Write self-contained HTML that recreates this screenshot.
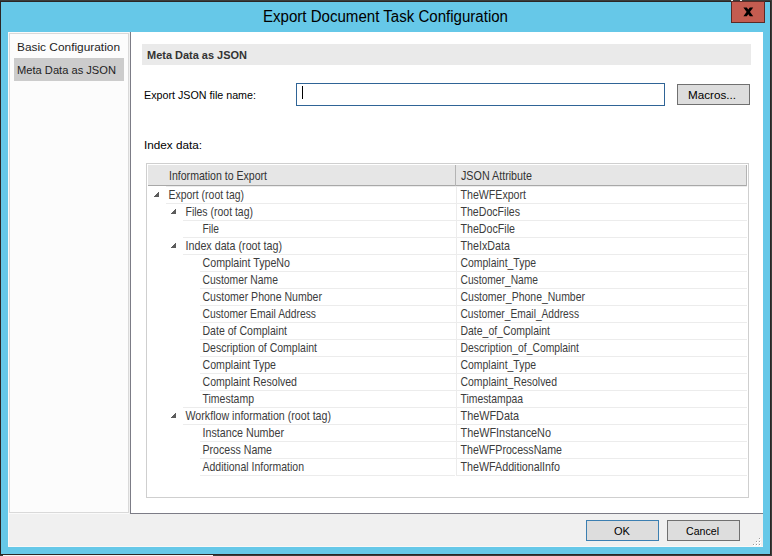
<!DOCTYPE html>
<html><head><meta charset="utf-8"><style>
html,body{margin:0;padding:0;width:772px;height:556px;overflow:hidden;position:relative;background:#2b2625;}
svg text{font-family:"Liberation Sans", sans-serif;}
</style></head><body>
<div style="position:absolute;left:0px;top:0px;width:772px;height:556px;background:#2b2625;"></div><div style="position:absolute;left:0px;top:0px;width:772px;height:1px;background:#3b3d3b;"></div><div style="position:absolute;left:0px;top:555px;width:772px;height:1px;background:#3b3d3b;"></div><div style="position:absolute;left:771px;top:0px;width:1px;height:556px;background:#3b3d3b;"></div><div style="position:absolute;left:1px;top:2px;width:769px;height:552px;background:#66c8e8;"></div><div style="position:absolute;left:8px;top:32px;width:755px;height:515px;background:#f0f0f0;"></div><div style="position:absolute;left:8px;top:32px;width:1px;height:515px;background:#fafafa;"></div><div style="position:absolute;left:8px;top:546px;width:755px;height:1px;background:#f8f8f8;"></div><div style="position:absolute;left:3px;top:555px;width:210px;height:1px;background:#f4f4f4;"></div><div style="position:absolute;left:8px;top:32px;width:121px;height:482px;background:#fafafa;"></div><div style="position:absolute;left:9px;top:33px;width:120px;height:480px;box-sizing:border-box;border:1px solid #d9d9d9;background:#fcfcfc"></div><div style="position:absolute;left:14px;top:58px;width:110px;height:23px;background:#cccccc;"></div><div style="position:absolute;left:130px;top:32px;width:633px;height:482px;background:#ffffff;"></div><div style="position:absolute;left:130px;top:32px;width:1px;height:482px;background:#7c7c86;"></div><div style="position:absolute;left:130px;top:513px;width:633px;height:1px;background:#7c7c86;"></div><div style="position:absolute;left:142px;top:44px;width:609px;height:21px;background:#eaeaea;"></div><div style="position:absolute;left:296px;top:83px;width:369px;height:23px;box-sizing:border-box;border:1px solid #2f6496;background:#ffffff"></div><div style="position:absolute;left:302px;top:86px;width:1px;height:13px;background:#000000;"></div><div style="position:absolute;left:677px;top:84px;width:73px;height:21px;box-sizing:border-box;border:1px solid #707070;background:#dddddd"></div><div style="position:absolute;left:146px;top:163px;width:603px;height:335px;box-sizing:border-box;border:1px solid #cfcfcf;background:#ffffff"></div><div style="position:absolute;left:148px;top:165px;width:599px;height:20px;background:#e6e6e6;"></div><div style="position:absolute;left:148px;top:185px;width:599px;height:1px;background:#a8a8a8;"></div><div style="position:absolute;left:746px;top:165px;width:1px;height:21px;background:#b4b4b4;"></div><div style="position:absolute;left:455px;top:165px;width:1px;height:21px;background:#b4b4b4;"></div><div style="position:absolute;left:166px;top:186px;width:290px;height:1px;background:#ececec;"></div><div style="position:absolute;left:456px;top:186px;width:291px;height:1px;background:#ececec;"></div><div style="position:absolute;left:158px;top:192px;width:1px;height:1px;background:#5c5c5c;"></div><div style="position:absolute;left:157px;top:193px;width:2px;height:1px;background:#5c5c5c;"></div><div style="position:absolute;left:156px;top:194px;width:3px;height:1px;background:#5c5c5c;"></div><div style="position:absolute;left:155px;top:195px;width:4px;height:1px;background:#5c5c5c;"></div><div style="position:absolute;left:154px;top:196px;width:5px;height:1px;background:#5c5c5c;"></div><div style="position:absolute;left:166px;top:203px;width:290px;height:1px;background:#ececec;"></div><div style="position:absolute;left:456px;top:203px;width:291px;height:1px;background:#ececec;"></div><div style="position:absolute;left:175px;top:209px;width:1px;height:1px;background:#5c5c5c;"></div><div style="position:absolute;left:174px;top:210px;width:2px;height:1px;background:#5c5c5c;"></div><div style="position:absolute;left:173px;top:211px;width:3px;height:1px;background:#5c5c5c;"></div><div style="position:absolute;left:172px;top:212px;width:4px;height:1px;background:#5c5c5c;"></div><div style="position:absolute;left:171px;top:213px;width:5px;height:1px;background:#5c5c5c;"></div><div style="position:absolute;left:183px;top:220px;width:273px;height:1px;background:#ececec;"></div><div style="position:absolute;left:456px;top:220px;width:291px;height:1px;background:#ececec;"></div><div style="position:absolute;left:183px;top:237px;width:273px;height:1px;background:#ececec;"></div><div style="position:absolute;left:456px;top:237px;width:291px;height:1px;background:#ececec;"></div><div style="position:absolute;left:175px;top:243px;width:1px;height:1px;background:#5c5c5c;"></div><div style="position:absolute;left:174px;top:244px;width:2px;height:1px;background:#5c5c5c;"></div><div style="position:absolute;left:173px;top:245px;width:3px;height:1px;background:#5c5c5c;"></div><div style="position:absolute;left:172px;top:246px;width:4px;height:1px;background:#5c5c5c;"></div><div style="position:absolute;left:171px;top:247px;width:5px;height:1px;background:#5c5c5c;"></div><div style="position:absolute;left:183px;top:254px;width:273px;height:1px;background:#ececec;"></div><div style="position:absolute;left:456px;top:254px;width:291px;height:1px;background:#ececec;"></div><div style="position:absolute;left:200px;top:271px;width:256px;height:1px;background:#ececec;"></div><div style="position:absolute;left:456px;top:271px;width:291px;height:1px;background:#ececec;"></div><div style="position:absolute;left:200px;top:288px;width:256px;height:1px;background:#ececec;"></div><div style="position:absolute;left:456px;top:288px;width:291px;height:1px;background:#ececec;"></div><div style="position:absolute;left:200px;top:305px;width:256px;height:1px;background:#ececec;"></div><div style="position:absolute;left:456px;top:305px;width:291px;height:1px;background:#ececec;"></div><div style="position:absolute;left:200px;top:322px;width:256px;height:1px;background:#ececec;"></div><div style="position:absolute;left:456px;top:322px;width:291px;height:1px;background:#ececec;"></div><div style="position:absolute;left:200px;top:339px;width:256px;height:1px;background:#ececec;"></div><div style="position:absolute;left:456px;top:339px;width:291px;height:1px;background:#ececec;"></div><div style="position:absolute;left:200px;top:356px;width:256px;height:1px;background:#ececec;"></div><div style="position:absolute;left:456px;top:356px;width:291px;height:1px;background:#ececec;"></div><div style="position:absolute;left:200px;top:373px;width:256px;height:1px;background:#ececec;"></div><div style="position:absolute;left:456px;top:373px;width:291px;height:1px;background:#ececec;"></div><div style="position:absolute;left:200px;top:390px;width:256px;height:1px;background:#ececec;"></div><div style="position:absolute;left:456px;top:390px;width:291px;height:1px;background:#ececec;"></div><div style="position:absolute;left:183px;top:407px;width:273px;height:1px;background:#ececec;"></div><div style="position:absolute;left:456px;top:407px;width:291px;height:1px;background:#ececec;"></div><div style="position:absolute;left:175px;top:413px;width:1px;height:1px;background:#5c5c5c;"></div><div style="position:absolute;left:174px;top:414px;width:2px;height:1px;background:#5c5c5c;"></div><div style="position:absolute;left:173px;top:415px;width:3px;height:1px;background:#5c5c5c;"></div><div style="position:absolute;left:172px;top:416px;width:4px;height:1px;background:#5c5c5c;"></div><div style="position:absolute;left:171px;top:417px;width:5px;height:1px;background:#5c5c5c;"></div><div style="position:absolute;left:183px;top:424px;width:273px;height:1px;background:#ececec;"></div><div style="position:absolute;left:456px;top:424px;width:291px;height:1px;background:#ececec;"></div><div style="position:absolute;left:200px;top:441px;width:256px;height:1px;background:#ececec;"></div><div style="position:absolute;left:456px;top:441px;width:291px;height:1px;background:#ececec;"></div><div style="position:absolute;left:200px;top:458px;width:256px;height:1px;background:#ececec;"></div><div style="position:absolute;left:456px;top:458px;width:291px;height:1px;background:#ececec;"></div><div style="position:absolute;left:200px;top:475px;width:255px;height:1px;background:#ececec;"></div><div style="position:absolute;left:456px;top:475px;width:291px;height:1px;background:#ececec;"></div><div style="position:absolute;left:456px;top:186px;width:1px;height:290px;background:#ececec;"></div><div style="position:absolute;left:586px;top:520px;width:73px;height:21px;box-sizing:border-box;border:1px solid #3c7fb1;background:#dddddd"></div><div style="position:absolute;left:667px;top:520px;width:73px;height:21px;box-sizing:border-box;border:1px solid #707070;background:#dddddd"></div><div style="position:absolute;left:759px;top:538px;width:2px;height:2px;background:#ffffff;"></div><div style="position:absolute;left:759px;top:538px;width:1px;height:1px;background:#9a9a9a;"></div><div style="position:absolute;left:756px;top:541px;width:2px;height:2px;background:#ffffff;"></div><div style="position:absolute;left:756px;top:541px;width:1px;height:1px;background:#9a9a9a;"></div><div style="position:absolute;left:759px;top:541px;width:2px;height:2px;background:#ffffff;"></div><div style="position:absolute;left:759px;top:541px;width:1px;height:1px;background:#9a9a9a;"></div><div style="position:absolute;left:753px;top:544px;width:2px;height:2px;background:#ffffff;"></div><div style="position:absolute;left:753px;top:544px;width:1px;height:1px;background:#9a9a9a;"></div><div style="position:absolute;left:756px;top:544px;width:2px;height:2px;background:#ffffff;"></div><div style="position:absolute;left:756px;top:544px;width:1px;height:1px;background:#9a9a9a;"></div><div style="position:absolute;left:759px;top:544px;width:2px;height:2px;background:#ffffff;"></div><div style="position:absolute;left:759px;top:544px;width:1px;height:1px;background:#9a9a9a;"></div><div style="position:absolute;left:731px;top:0px;width:2px;height:1px;background:#e8e8e8;"></div><div style="position:absolute;left:740px;top:0px;width:2px;height:1px;background:#e8e8e8;"></div><div style="position:absolute;left:731px;top:1px;width:34px;height:22px;box-sizing:border-box;border:1px solid #5a2a26;background:#c45c50"></div>
<svg width="772" height="556" style="position:absolute;left:0;top:0"><path d="M743.4 7.6H746.8L753.2 16.2H749.8ZM749.8 7.6H753.2L746.8 16.2H743.4Z" fill="#000"/><text x="168.5" y="199" font-size="12.57" font-weight="normal" fill="#3c3c3c" textLength="75.5" lengthAdjust="spacingAndGlyphs">Export (root tag)</text><text x="460.5" y="199" font-size="12.57" font-weight="normal" fill="#3c3c3c" textLength="65.5" lengthAdjust="spacingAndGlyphs">TheWFExport</text><text x="185.5" y="216" font-size="12.57" font-weight="normal" fill="#3c3c3c" textLength="67.5" lengthAdjust="spacingAndGlyphs">Files (root tag)</text><text x="460.5" y="216" font-size="12.57" font-weight="normal" fill="#3c3c3c" textLength="59.5" lengthAdjust="spacingAndGlyphs">TheDocFiles</text><text x="202.5" y="233" font-size="12.57" font-weight="normal" fill="#3c3c3c" textLength="16.5" lengthAdjust="spacingAndGlyphs">File</text><text x="460.5" y="233" font-size="12.57" font-weight="normal" fill="#3c3c3c" textLength="54.5" lengthAdjust="spacingAndGlyphs">TheDocFile</text><text x="185.5" y="250" font-size="12.57" font-weight="normal" fill="#3c3c3c" textLength="96.5" lengthAdjust="spacingAndGlyphs">Index data (root tag)</text><text x="460.5" y="250" font-size="12.57" font-weight="normal" fill="#3c3c3c" textLength="49.5" lengthAdjust="spacingAndGlyphs">TheIxData</text><text x="202.5" y="267" font-size="12.57" font-weight="normal" fill="#3c3c3c" textLength="87.5" lengthAdjust="spacingAndGlyphs">Complaint TypeNo</text><text x="460.5" y="267" font-size="12.57" font-weight="normal" fill="#3c3c3c" textLength="75.5" lengthAdjust="spacingAndGlyphs">Complaint_Type</text><text x="202.5" y="284" font-size="12.57" font-weight="normal" fill="#3c3c3c" textLength="75.5" lengthAdjust="spacingAndGlyphs">Customer Name</text><text x="460.5" y="284" font-size="12.57" font-weight="normal" fill="#3c3c3c" textLength="77.5" lengthAdjust="spacingAndGlyphs">Customer_Name</text><text x="202.5" y="301" font-size="12.57" font-weight="normal" fill="#3c3c3c" textLength="119.5" lengthAdjust="spacingAndGlyphs">Customer Phone Number</text><text x="460.5" y="301" font-size="12.57" font-weight="normal" fill="#3c3c3c" textLength="124.5" lengthAdjust="spacingAndGlyphs">Customer_Phone_Number</text><text x="202.5" y="318" font-size="12.57" font-weight="normal" fill="#3c3c3c" textLength="113.5" lengthAdjust="spacingAndGlyphs">Customer Email Address</text><text x="460.5" y="318" font-size="12.57" font-weight="normal" fill="#3c3c3c" textLength="118.5" lengthAdjust="spacingAndGlyphs">Customer_Email_Address</text><text x="202.5" y="335" font-size="12.57" font-weight="normal" fill="#3c3c3c" textLength="84.5" lengthAdjust="spacingAndGlyphs">Date of Complaint</text><text x="460.5" y="335" font-size="12.57" font-weight="normal" fill="#3c3c3c" textLength="89.5" lengthAdjust="spacingAndGlyphs">Date_of_Complaint</text><text x="202.5" y="352" font-size="12.57" font-weight="normal" fill="#3c3c3c" textLength="114.5" lengthAdjust="spacingAndGlyphs">Description of Complaint</text><text x="460.5" y="352" font-size="12.57" font-weight="normal" fill="#3c3c3c" textLength="118.5" lengthAdjust="spacingAndGlyphs">Description_of_Complaint</text><text x="202.5" y="369" font-size="12.57" font-weight="normal" fill="#3c3c3c" textLength="73.5" lengthAdjust="spacingAndGlyphs">Complaint Type</text><text x="460.5" y="369" font-size="12.57" font-weight="normal" fill="#3c3c3c" textLength="75.5" lengthAdjust="spacingAndGlyphs">Complaint_Type</text><text x="202.5" y="386" font-size="12.57" font-weight="normal" fill="#3c3c3c" textLength="94.5" lengthAdjust="spacingAndGlyphs">Complaint Resolved</text><text x="460.5" y="386" font-size="12.57" font-weight="normal" fill="#3c3c3c" textLength="96.5" lengthAdjust="spacingAndGlyphs">Complaint_Resolved</text><text x="202.5" y="403" font-size="12.57" font-weight="normal" fill="#3c3c3c" textLength="51.5" lengthAdjust="spacingAndGlyphs">Timestamp</text><text x="460.5" y="403" font-size="12.57" font-weight="normal" fill="#3c3c3c" textLength="62.5" lengthAdjust="spacingAndGlyphs">Timestampaa</text><text x="185.5" y="420" font-size="12.57" font-weight="normal" fill="#3c3c3c" textLength="145.5" lengthAdjust="spacingAndGlyphs">Workflow information (root tag)</text><text x="460.5" y="420" font-size="12.57" font-weight="normal" fill="#3c3c3c" textLength="58.5" lengthAdjust="spacingAndGlyphs">TheWFData</text><text x="202.5" y="437" font-size="12.57" font-weight="normal" fill="#3c3c3c" textLength="81.5" lengthAdjust="spacingAndGlyphs">Instance Number</text><text x="460.5" y="437" font-size="12.57" font-weight="normal" fill="#3c3c3c" textLength="90.5" lengthAdjust="spacingAndGlyphs">TheWFInstanceNo</text><text x="202.5" y="454" font-size="12.57" font-weight="normal" fill="#3c3c3c" textLength="69.5" lengthAdjust="spacingAndGlyphs">Process Name</text><text x="460.5" y="454" font-size="12.57" font-weight="normal" fill="#3c3c3c" textLength="101.5" lengthAdjust="spacingAndGlyphs">TheWFProcessName</text><text x="202.5" y="471" font-size="12.57" font-weight="normal" fill="#3c3c3c" textLength="101.5" lengthAdjust="spacingAndGlyphs">Additional Information</text><text x="460.5" y="471" font-size="12.57" font-weight="normal" fill="#3c3c3c" textLength="99.5" lengthAdjust="spacingAndGlyphs">TheWFAdditionalInfo</text><text x="263" y="22" font-size="15.6" font-weight="normal" fill="#000" textLength="245" lengthAdjust="spacingAndGlyphs">Export Document Task Configuration</text><text x="17" y="51" font-size="11.17" font-weight="normal" fill="#1e1e1e" textLength="103" lengthAdjust="spacingAndGlyphs">Basic Configuration</text><text x="17" y="74" font-size="11.17" font-weight="normal" fill="#1e1e1e" textLength="99" lengthAdjust="spacingAndGlyphs">Meta Data as JSON</text><text x="147" y="59" font-size="11.17" font-weight="bold" fill="#333333" textLength="100" lengthAdjust="spacingAndGlyphs">Meta Data as JSON</text><text x="144" y="99" font-size="11.17" font-weight="normal" fill="#000" textLength="112" lengthAdjust="spacingAndGlyphs">Export JSON file name:</text><text x="688" y="99" font-size="11.17" font-weight="normal" fill="#000" textLength="48" lengthAdjust="spacingAndGlyphs">Macros...</text><text x="144" y="149" font-size="11.17" font-weight="normal" fill="#000" textLength="58" lengthAdjust="spacingAndGlyphs">Index data:</text><text x="169" y="180" font-size="12.57" font-weight="normal" fill="#333333" textLength="98" lengthAdjust="spacingAndGlyphs">Information to Export</text><text x="461" y="180" font-size="12.57" font-weight="normal" fill="#333333" textLength="71" lengthAdjust="spacingAndGlyphs">JSON Attribute</text><text x="614" y="535" font-size="11.17" font-weight="normal" fill="#000" textLength="16" lengthAdjust="spacingAndGlyphs">OK</text><text x="686" y="535" font-size="11.17" font-weight="normal" fill="#000" textLength="33" lengthAdjust="spacingAndGlyphs">Cancel</text></svg>
</body></html>
